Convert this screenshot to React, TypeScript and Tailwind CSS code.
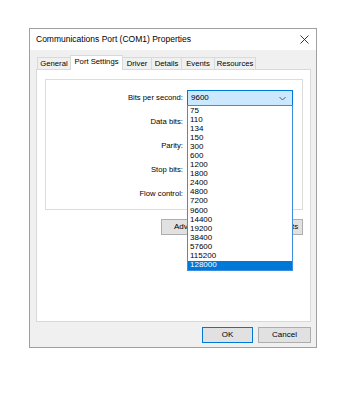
import React from "react";

const font = { fontFamily: '"Liberation Sans", Arial, sans-serif' };

const rates = [
  "75", "110", "134", "150", "300", "600", "1200", "1800", "2400", "4800",
  "7200", "9600", "14400", "19200", "38400", "57600", "115200", "128000",
];

function Chevron() {
  return (
    <svg width="7" height="5" viewBox="0 0 7 5" className="shrink-0">
      <path d="M0.5 1 L3.5 4 L6.5 1" fill="none" stroke="#505050" strokeWidth="0.9" />
    </svg>
  );
}

function Combo({ value, active }: { value: string; active?: boolean }) {
  return (
    <div
      className={
        "w-[106px] h-[16px] flex items-center justify-between pl-[3px] pr-[6px] border " +
        (active ? "bg-[#cce8ff] border-[#0078d7]" : "bg-[#e1e1e1] border-[#adadad]")
      }
    >
      <span>{value}</span>
      <Chevron />
    </div>
  );
}

function Row({ label, value, children }: { label: string; value: string; children?: React.ReactNode }) {
  return (
    <div className="flex items-center justify-end gap-[4px] h-[16px]">
      <span className="text-[7.7px]">{label}</span>
      <div className="relative">
        <Combo value={value} active={!!children} />
        {children}
      </div>
    </div>
  );
}

function Tab({ label, w, selected }: { label: string; w: string; selected?: boolean }) {
  return (
    <div
      className={
        "flex items-center justify-center border-l border-t border-r border-[#d9d9d9] ml-[-1px] text-[7.7px] " +
        w +
        (selected ? " h-[15px] mb-[-1px] bg-white relative z-10 pb-[2px]" : " h-[12px] bg-[#f0f0f0]")
      }
    >
      {label}
    </div>
  );
}

function Btn({ label, w, def }: { label: string; w: string; def?: boolean }) {
  return (
    <div
      className={
        "h-[16px] flex items-center justify-center bg-[#e1e1e1] border " +
        w +
        (def ? " border-[#0078d7]" : " border-[#adadad]")
      }
    >
      {label}
    </div>
  );
}

export default function App() {
  return (
    <div className="w-[356px] h-[400px] bg-white pt-[28px] pl-[29px] text-black text-[8px] leading-none" style={font}>
      <div className="w-[288px] h-[320px] border border-[#a0a0a0] flex flex-col bg-[#f0f0f0]">
        {/* Title bar */}
        <div className="h-[21px] bg-white flex items-center justify-between pl-[6px] pr-[6px] shrink-0">
          <span className="text-[8.5px]">Communications Port (COM1) Properties</span>
          <svg width="9" height="9" viewBox="0 0 9 9" className="mr-[1px]">
            <path d="M0.5 0.5 L8.5 8.5 M8.5 0.5 L0.5 8.5" stroke="#222" strokeWidth="0.9" />
          </svg>
        </div>

        {/* Body */}
        <div className="flex flex-col pt-[5px] pl-[6px] pr-[5px]">
          {/* Tabs */}
          <div className="h-[14px] flex items-end pl-[2px]">
            <Tab label="General" w="w-[34px]" />
            <Tab label="Port Settings" w="w-[53px]" selected />
            <Tab label="Driver" w="w-[30px]" />
            <Tab label="Details" w="w-[31px]" />
            <Tab label="Events" w="w-[34px]" />
            <Tab label="Resources" w="w-[42px]" />
          </div>

          {/* Pane */}
          <div className="w-[275px] h-[253px] bg-white border border-[#d9d9d9] pt-[9px] pl-[8px] pr-[7px] flex flex-col">
            <div className="w-[258px] h-[131px] border border-[#dcdcdc] pt-[10px] pr-[9px] flex flex-col gap-[8px]">
              <Row label="Bits per second:" value="9600">
                <div className="absolute left-0 top-[15px] w-[106px] h-[166px] bg-white border border-[#3d8ee0] z-20 flex flex-col">
                  {rates.map((r) => (
                    <div
                      key={r}
                      className={
                        "h-[9.1px] flex items-center pl-[2px] " +
                        (r === "128000" ? "bg-[#0078d7] text-white" : "")
                      }
                    >
                      {r}
                    </div>
                  ))}
                </div>
              </Row>
              <Row label="Data bits:" value="" />
              <Row label="Parity:" value="" />
              <Row label="Stop bits:" value="" />
              <Row label="Flow control:" value="" />
            </div>
            <div className="flex justify-end gap-[5px] mt-[9px]">
              <Btn label="Advanced..." w="w-[68px]" />
              <Btn label="Restore Defaults" w="w-[69px]" />
            </div>
          </div>

          {/* Dialog buttons */}
          <div className="flex justify-end gap-[5px] mt-[5px]">
            <Btn label="OK" w="w-[51px]" def />
            <Btn label="Cancel" w="w-[53px]" />
          </div>
        </div>
      </div>
    </div>
  );
}
